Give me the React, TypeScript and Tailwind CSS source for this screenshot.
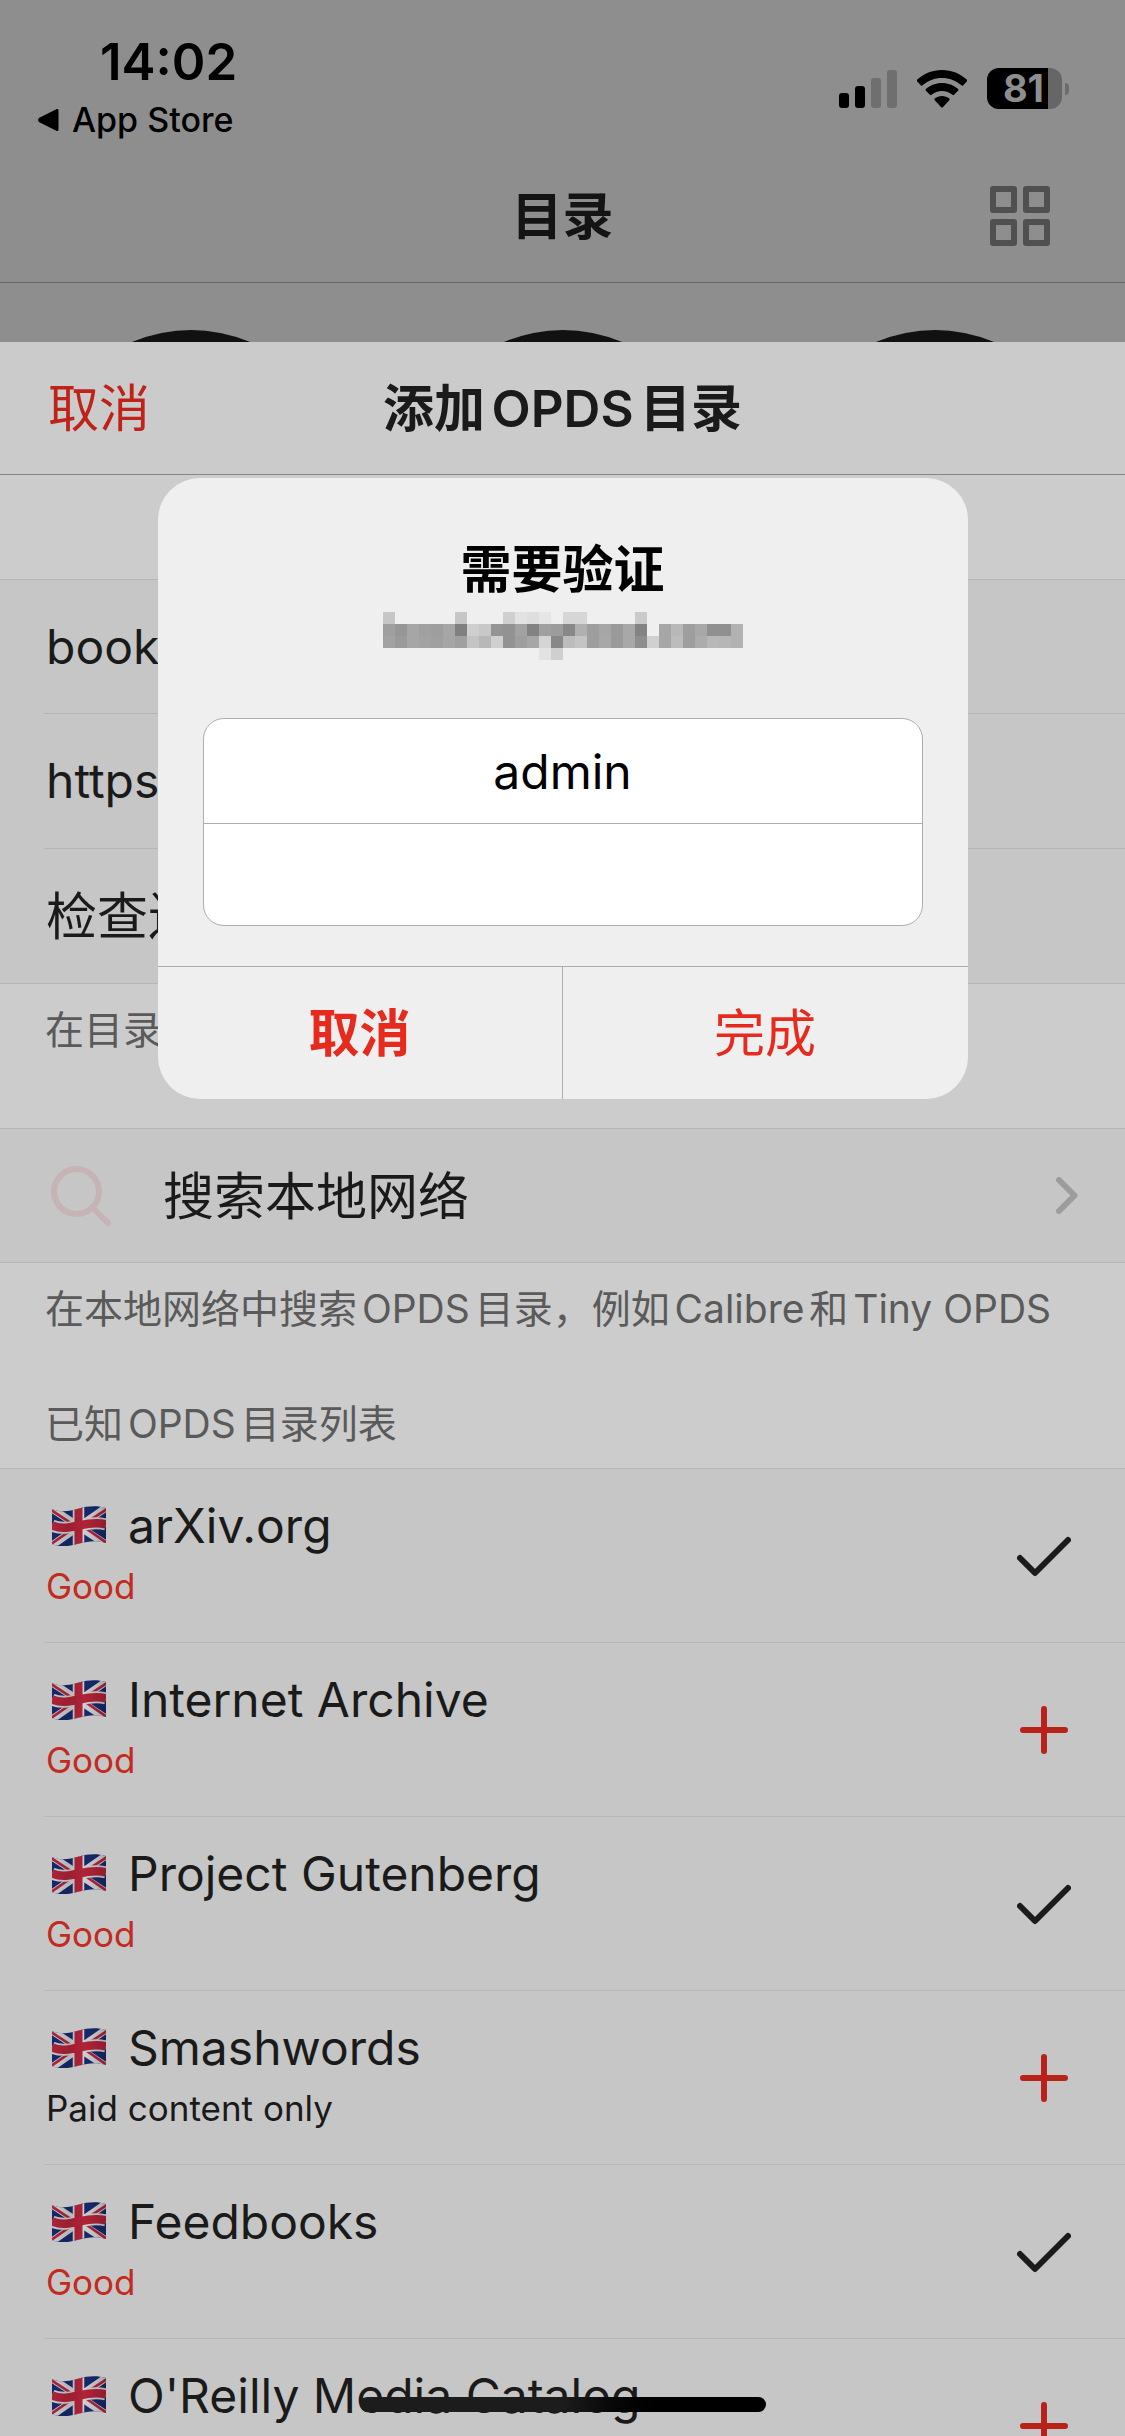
import React from "react";

type Catalog = { name: string; note?: string; good: boolean; added: boolean };

const catalogs: Catalog[] = [
  { name: "arXiv.org", note: "Good", good: true, added: true },
  { name: "Internet Archive", note: "Good", good: true, added: false },
  { name: "Project Gutenberg", note: "Good", good: true, added: true },
  { name: "Smashwords", note: "Paid content only", good: false, added: false },
  { name: "Feedbooks", note: "Good", good: true, added: true },
  { name: "O'Reilly Media Catalog", good: true, added: false },
];

// Grey levels of the pixelated host name, one list per row; 0 is an empty cell.
const mosaic: number[][] = [
  [198, 0, 0, 0, 0, 0, 198, 0, 0, 0, 207, 226, 222, 230, 0, 214, 214, 0, 0, 0, 0, 202, 0, 0, 0, 0, 0, 0, 0, 0],
  [159, 150, 166, 160, 158, 166, 128, 207, 200, 148, 146, 162, 130, 160, 156, 136, 176, 158, 166, 154, 168, 131, 0, 166, 184, 158, 168, 144, 144, 178],
  [162, 154, 166, 162, 160, 166, 160, 196, 184, 208, 146, 158, 166, 212, 136, 188, 196, 158, 168, 154, 168, 142, 208, 166, 188, 158, 172, 184, 182, 178],
  [0, 0, 0, 0, 0, 0, 0, 0, 0, 0, 0, 0, 0, 226, 207, 0, 0, 0, 0, 0, 0, 0, 0, 0, 0, 0, 0, 0, 0, 0],
];

function Signal() {
  return (
    <svg width="58" height="38" viewBox="0 0 58 38" aria-hidden="true">
      <rect x="0" y="23" width="10" height="15" rx="3" fill="#000" />
      <rect x="16" y="16" width="10" height="22" rx="3" fill="#000" />
      <rect x="32" y="8" width="10" height="30" rx="3" fill="#6f6f6f" />
      <rect x="48" y="0" width="10" height="38" rx="3" fill="#6f6f6f" />
    </svg>
  );
}

function Wifi() {
  return (
    <svg width="50" height="38" viewBox="0 0 50 38" aria-hidden="true">
      <path d="M25 0C34.600 0 43.400 3.700 50 9.800Q50.600 10.600 50 11.300L46 15.400Q45.200 16 44.400 15.300C39.200 10.700 32.400 8 25 8S10.800 10.700 5.600 15.300Q4.800 16 4 15.400L0 11.300Q-.6 10.600 0 9.800C6.600 3.700 15.400 0 25 0Z" />
      <path d="M25 13C31.200 13 36.800 15.300 41.100 19.100Q41.800 19.900 41.100 20.700L37 24.800Q36.200 25.500 35.400 24.800C32.600 22.400 29 21 25 21S17.400 22.400 14.600 24.800Q13.800 25.500 13 24.800L8.900 20.700Q8.200 19.900 8.900 19.100C13.200 15.300 18.800 13 25 13Z" />
      <path d="M25 26C27.800 26 30.300 27 32.300 28.600Q33.100 29.400 32.300 30.200L25.800 37.200Q25 38 24.200 37.200L17.700 30.200Q16.900 29.400 17.700 28.600C19.700 27 22.200 26 25 26Z" />
    </svg>
  );
}

function Battery() {
  return (
    <div className="flex items-center gap-[3px]" role="img" aria-label="81%">
      <div className="flex h-[41px] w-[75px] rounded-xl bg-[#666]">
        <span className="w-[61px] rounded-l-xl bg-black pr-1 text-right text-[38px] leading-[41px] font-bold text-[#8e8e8e]">
          81
        </span>
      </div>
      <div className="h-3 w-1 rounded-r-full bg-[#6c6c6c]" />
    </div>
  );
}

function Flag() {
  return (
    <svg width="54" height="40" viewBox="0 0 54 40" className="shrink-0" aria-hidden="true">
      <defs>
        <clipPath id="flag-shape">
          <path d="M0 3C9 7 18 5 27 2.500S45 -.5 54 2V37C45 34 36 35 27 37.500S9 42 0 38Z" />
        </clipPath>
        <linearGradient id="flag-shade" x1="0" x2="1" y1="0" y2="0">
          <stop offset="0" stopColor="#000" stopOpacity="0.02" />
          <stop offset="0.3" stopColor="#000" stopOpacity="0.12" />
          <stop offset="0.6" stopColor="#000" stopOpacity="0" />
          <stop offset="1" stopColor="#000" stopOpacity="0.18" />
        </linearGradient>
      </defs>
      <g clipPath="url(#flag-shape)">
        <rect width="54" height="42" fill="#162a6c" />
        <path d="M-1 2L55 39M-1 40L55 1" stroke="#cfcfd2" strokeWidth="7.500" />
        <path d="M-1 4L25 21M55 37L29 19M-1 38L25 20M55 3L29 20" stroke="#b02338" strokeWidth="2.600" />
        <path d="M0 19.500C9 23.500 18 21.500 27 19.500S45 16 54 18.500" fill="none" stroke="#cfcfd2" strokeWidth="12" />
        <path d="M26.500 0V42" stroke="#cfcfd2" strokeWidth="11.500" />
        <path d="M0 19.500C9 23.500 18 21.500 27 19.500S45 16 54 18.500" fill="none" stroke="#b02338" strokeWidth="8.500" />
        <path d="M26.500 0V42" stroke="#b02338" strokeWidth="8" />
        <rect width="54" height="42" fill="url(#flag-shade)" />
      </g>
    </svg>
  );
}

function Check() {
  return (
    <svg width="54" height="54" viewBox="0 0 54 54" fill="none" stroke="#1b1b1b" strokeWidth="6" strokeLinecap="round" strokeLinejoin="round" aria-hidden="true">
      <path d="M3 29L18 44L51 11" />
    </svg>
  );
}

function Plus() {
  return (
    <svg width="54" height="54" viewBox="0 0 54 54" fill="none" stroke="#b92219" strokeWidth="6" strokeLinecap="round" aria-hidden="true">
      <path d="M27 6V48M6 27H48" />
    </svg>
  );
}

export default function App() {
  return (
    <div className="relative h-screen overflow-hidden bg-[#c6c6c6] font-['Inter','Noto_Sans_CJK_SC',sans-serif] text-[51px] leading-[60px] text-[#1a1a1a] [text-autospace:normal]">
      <header className="border-b border-[#666] bg-[#8e8e8e]">
        <div className="flex h-[150px] items-start justify-between pr-14 pl-9 text-black">
          <div className="pt-8">
            <div className="pl-16 font-semibold">14:02</div>
            <button type="button" className="mt-2 flex items-center gap-3 text-[34px] leading-10 font-medium">
              <svg width="24" height="22" viewBox="0 0 24 22" aria-hidden="true">
                <path d="M21 1.500V20.500L4 11.800Q3 11 4 10.200Z" stroke="#000" strokeWidth="3" strokeLinejoin="round" />
              </svg>
              App Store
            </button>
          </div>
          <div className="flex items-center gap-5 pt-[68px]">
            <Signal />
            <Wifi />
            <Battery />
          </div>
        </div>
        <div className="grid h-[132px] grid-cols-[1fr_auto_1fr] items-center px-[75px]">
          <h1 className="col-start-2 pt-0.5 font-semibold text-[#141414]">目录</h1>
          <button type="button" aria-label="网格视图" className="justify-self-end">
            <svg width="60" height="60" viewBox="0 0 60 60" fill="none" stroke="#505050" strokeWidth="6" strokeLinejoin="round" aria-hidden="true">
              <path d="M3 3H24V24H3ZM36 3H57V24H36ZM3 36H24V57H3ZM36 36H57V57H36Z" />
            </svg>
          </button>
        </div>
      </header>

      <div className="flex h-[59px] justify-center gap-[70px] overflow-hidden bg-[#8e8e8e] pt-[47px]">
        <div className="size-[302px] rounded-full bg-[#111]" />
        <div className="size-[302px] rounded-full bg-[#111]" />
        <div className="size-[302px] rounded-full bg-[#111]" />
      </div>

      <section className="bg-[#ccc]">
        <div className="grid h-[133px] grid-cols-[1fr_auto_1fr] items-center border-b border-[#868686] bg-[#cbcbcb] px-12 pt-0.5">
          <button type="button" className="justify-self-start text-[#bf2219]">取消</button>
          <h2 className="font-semibold">添加OPDS目录</h2>
        </div>

        <div className="mt-[104px] border-y border-[#b5b5b5] bg-[#c6c6c6] pl-11">
          <div className="flex h-[134px] items-center border-b border-[#b5b5b5]">
            <input aria-label="名称" defaultValue="book" className="w-full bg-transparent pl-0.5 text-[48px] outline-none" />
          </div>
          <div className="flex h-[135px] items-center border-b border-[#b5b5b5]">
            <input aria-label="网址" defaultValue="https://" className="w-full bg-transparent pl-0.5 text-[48px] outline-none" />
          </div>
          <button type="button" className="flex h-[134px] w-full items-center pt-0.5 pl-0.5">检查连接</button>
        </div>

        <p className="h-36 px-[45px] pt-4 text-[39px] text-[#5a5a5a]">在目录</p>

        <button type="button" className="flex h-[135px] w-full items-center border-y border-[#b5b5b5] bg-[#c6c6c6] pr-[47px] pl-[51px]">
          <svg width="60" height="60" viewBox="0 0 60 60" fill="none" stroke="#c6b3b5" strokeWidth="6" strokeLinecap="round" aria-hidden="true">
            <circle cx="25.500" cy="25.500" r="22.500" />
            <path d="M42 42L57 57" />
          </svg>
          <span className="pt-0.5 pl-[52px]">搜索本地网络</span>
          <svg width="22" height="37" viewBox="0 0 22 37" fill="none" stroke="#9c9c9c" strokeWidth="6" strokeLinecap="round" strokeLinejoin="round" className="ml-auto" aria-hidden="true">
            <path d="M3 3L18.500 18.500L3 34" />
          </svg>
        </button>

        <p className="px-[45px] pt-4 text-[39px] whitespace-nowrap text-[#5a5a5a]">
          在本地网络中搜索OPDS目录，例如Calibre和Tiny OPDS
        </p>
        <h3 className="px-[45px] pt-[55px] pb-[14px] text-[39px] text-[#5a5a5a]">已知OPDS目录列表</h3>

        <ul className="border-t border-[#b5b5b5] bg-[#c6c6c6] pl-11">
          {catalogs.map((c) => (
            <li key={c.name} className="flex h-[174px] items-center justify-between border-b border-[#b8b8b8] pr-[54px]">
              <div className="pl-0.5">
                <div className="flex items-center gap-[22px] pl-1.5 text-[48px]">
                  <Flag />
                  <span>{c.name}</span>
                </div>
                <div className={c.good ? "h-[60px] text-[35px] text-[#c32a20]" : "h-[60px] text-[35px] text-[#1a1a1a]"}>{c.note}</div>
              </div>
              <button type="button" aria-label={c.added ? "已添加" : "添加"}>
                {c.added ? <Check /> : <Plus />}
              </button>
            </li>
          ))}
        </ul>
      </section>

      <div className="absolute inset-x-0 top-[478px] flex justify-center">
        <form role="dialog" aria-labelledby="auth-title" className="w-[72%] overflow-hidden rounded-[42px] bg-[#efefef]" onSubmit={(e) => e.preventDefault()}>
          <div className="px-[45px] pt-[62px] pb-10">
            <h2 id="auth-title" className="text-center font-semibold text-black">需要验证</h2>
            <svg width="360" height="48" viewBox="0 0 360 48" className="mx-auto mt-3" shapeRendering="crispEdges" role="img" aria-label="已隐藏的主机名">
              {mosaic.map((row, y) =>
                row.map((v, x) =>
                  v ? <rect key={x + "-" + y} x={x * 12} y={y * 12} width="12" height="12" fill={`rgb(${v},${v},${v})`} /> : null
                )
              )}
            </svg>
            <div className="mt-[58px] overflow-hidden rounded-[21px] border border-[#adadad] bg-white text-[48px] text-black">
              <input aria-label="用户名" defaultValue="admin" className="block h-[105px] w-full border-b border-[#adadad] text-center outline-none" />
              <input aria-label="密码" type="password" className="block h-[101px] w-full text-center outline-none" />
            </div>
          </div>
          <div className="grid h-[133px] grid-cols-2 border-t border-[#adadad] text-[#e62a1d]">
            <button type="button" className="border-r border-[#adadad] pt-0.5 font-semibold">取消</button>
            <button type="submit" className="pt-0.5">完成</button>
          </div>
        </form>
      </div>

      <div className="absolute inset-x-0 bottom-6 flex justify-center">
        <div className="h-[15px] w-[406px] rounded-full bg-linear-to-r from-[#1c1c1c] from-50% to-black to-80%" />
      </div>
    </div>
  );
}
